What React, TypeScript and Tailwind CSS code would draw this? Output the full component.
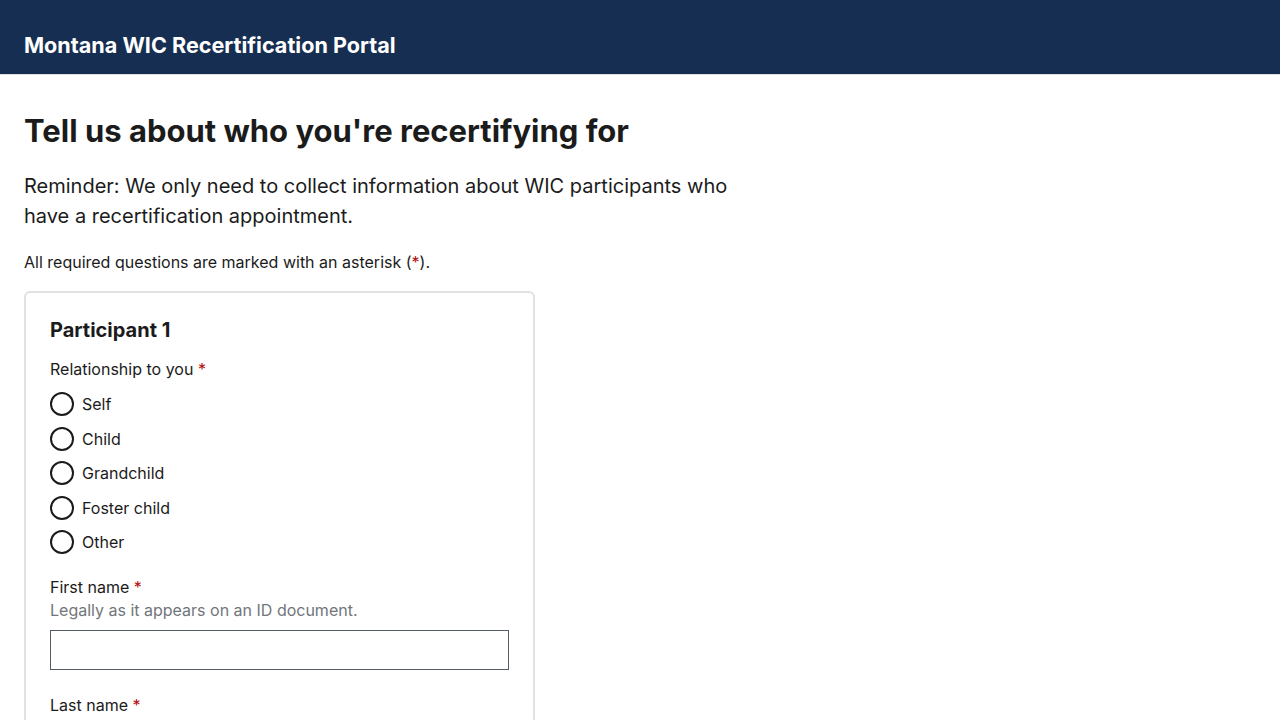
import React from "react";

const options = ["Self", "Child", "Grandchild", "Foster child", "Other"];

function Required() {
  return <span className="text-[#b50909]"> *</span>;
}

function Radio({ label }: { label: string }) {
  return (
    <label className="flex items-center h-[34.5px] cursor-pointer">
      <span className="w-6 h-6 rounded-full border-2 border-[#1b1b1b] bg-white shrink-0" />
      <span className="ml-2 text-[16px]">{label}</span>
    </label>
  );
}

function TextField({ label, hint, first }: { label: string; hint: string; first?: boolean }) {
  return (
    <div className={first ? "mt-4" : "mt-6"}>
      <div className="text-[16px] leading-[22px]">
        {label}
        <Required />
      </div>
      <div className="text-[16px] leading-[24px] text-[#71767a]">{hint}</div>
      <input className="mt-2 block w-full h-10 border border-[#565c65] bg-white px-2" />
    </div>
  );
}

export default function App() {
  return (
    <div className="min-h-screen bg-white text-[#1b1b1b] font-['Inter',sans-serif]">
      {/* Header */}
      <header className="bg-[#162e51] h-[75px] border-b border-[#dfe1e2] flex items-end px-6 pb-[15px]">
        <div className="text-white text-[21.6px] font-bold leading-[28px]">
          Montana WIC Recertification Portal
        </div>
      </header>

      <main className="px-6 pt-[36px]">
        <h1 className="text-[31px] font-bold leading-[40px]">
          Tell us about who you're recertifying for
        </h1>
        <p className="mt-[20px] text-[20px] leading-[30px] max-w-[720px]">
          Reminder: We only need to collect information about WIC participants who have a
          recertification appointment.
        </p>
        <p className="mt-[19px] text-[16px] leading-[24px]">
          All required questions are marked with an asterisk (<span className="text-[#b50909]">*</span>).
        </p>

        <div className="mt-[17px] w-[511px] border-2 border-[#dfe1e2] rounded-md px-6 pt-[22px] pb-6">
          <h2 className="text-[20px] font-bold leading-[30px]">Participant 1</h2>
          <div className="mt-[12px] text-[16px] leading-[24px]">
            Relationship to you
            <Required />
          </div>
          <div className="mt-[6px]">
            {options.map((o) => (
              <Radio key={o} label={o} />
            ))}
          </div>
          <TextField first label="First name" hint="Legally as it appears on an ID document." />
          <TextField label="Last name" hint="Legally as it appears on an ID document." />
        </div>
      </main>
    </div>
  );
}
